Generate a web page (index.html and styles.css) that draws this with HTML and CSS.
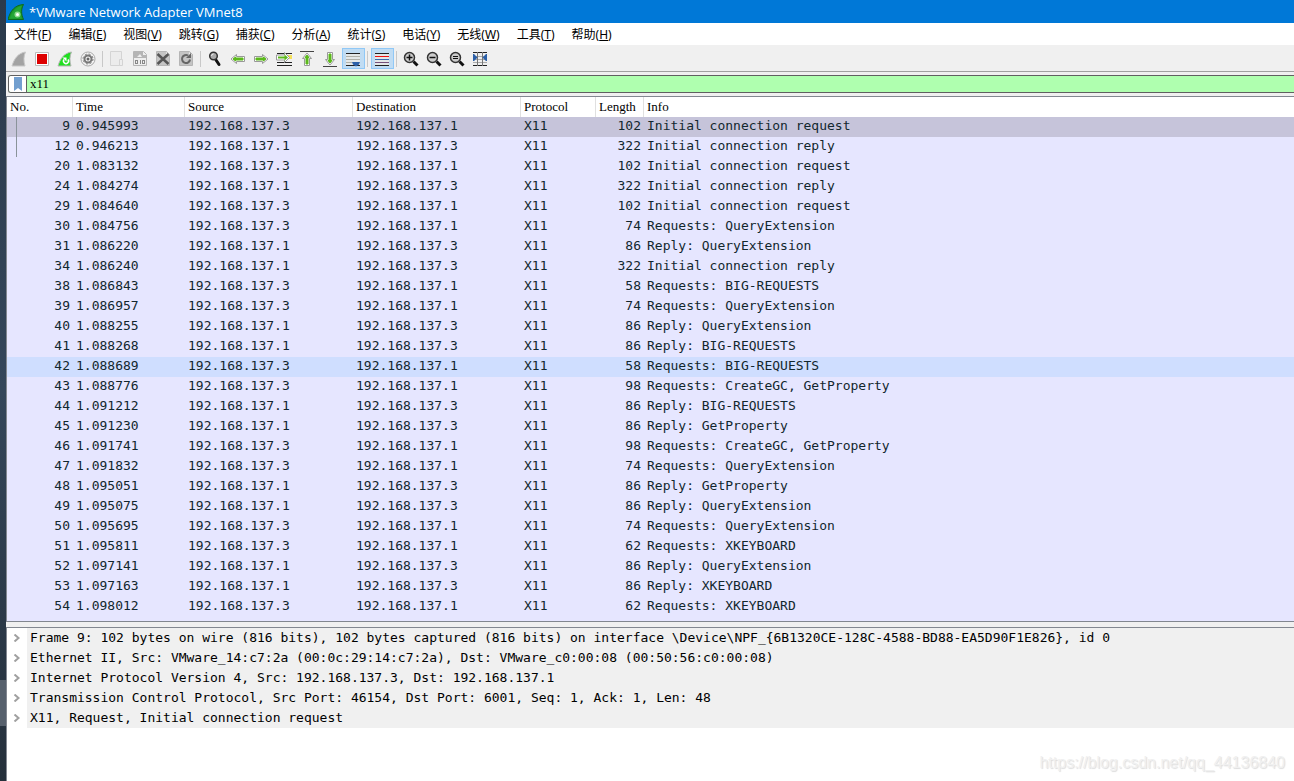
FILE: index.html
```html
<!DOCTYPE html>
<html lang="zh-CN">
<head>
    <meta charset="UTF-8">
    <meta name="viewport" content="width=device-width, initial-scale=1.0">
    <title>*VMware Network Adapter VMnet8</title>
    <link rel="stylesheet" href="styles.css">
</head>
<body>
    <!-- desktop behind the window -->
    <div class="desktop"><span class="desktop-thumb"></span></div>

    <div class="window">
        <header class="titlebar">
            <svg class="logo" width="16" height="16" viewBox="0 0 16 16">
                <path d="M0 15.500C2 7 7 1 15.500 .5C13 5 13 10 15.500 15.500Z" fill="#1c9a2a" stroke="#0c6b1c"/>
                <path d="M2 14.500C4 8 8 3 13.500 2C12 6 12 10 13.500 14.500Z" fill="#24a637"/>
                <circle cx="9.500" cy="10.500" r="3" fill="#8fdc8f"/>
                <circle cx="9.500" cy="10.500" r="1.500" fill="#fff"/>
            </svg>
            <span>*VMware Network Adapter VMnet8</span>
        </header>

        <nav class="menu">
            <a href="#">文件(<u>F</u>)</a>
            <a href="#">编辑(<u>E</u>)</a>
            <a href="#">视图(<u>V</u>)</a>
            <a href="#">跳转(<u>G</u>)</a>
            <a href="#">捕获(<u>C</u>)</a>
            <a href="#">分析(<u>A</u>)</a>
            <a href="#">统计(<u>S</u>)</a>
            <a href="#">电话(<u>Y</u>)</a>
            <a href="#">无线(<u>W</u>)</a>
            <a href="#">工具(<u>T</u>)</a>
            <a href="#">帮助(<u>H</u>)</a>
        </nav>

        <div class="toolbar">
            <button aria-label="Start capture"><svg viewBox="0 0 16 16"><path d="M1 15C3 8 7 2 14.500 1C12.500 5 12.500 10 14 15Z" fill="#a3a3a3" stroke="#c8c8c8"/></svg></button>
            <button aria-label="Stop capture"><svg viewBox="0 0 16 16"><path d="M1.500 1.500h13v13h-13z" fill="#fff" stroke="#bbb"/><path d="M3 3h10v10H3z" fill="#d00"/></svg></button>
            <button aria-label="Restart capture"><svg viewBox="0 0 16 16"><path d="M1 15C3 8 7 2 14.500 1C12.500 5 12.500 10 14 15Z" fill="#1ee01e" stroke="#b5b5b5"/><path d="M7 8.500a2.500 2.500 0 1 0 4 0" fill="none" stroke="#fff" stroke-width="1.500"/><path d="M5.500 6.500h4v4z" fill="#fff"/></svg></button>
            <button aria-label="Capture options"><svg viewBox="0 0 16 16"><circle cx="8" cy="8" r="7" fill="#f4f4f4" stroke="#aaa"/><circle cx="8" cy="8" r="3.500" fill="none" stroke="#777" stroke-width="2"/><circle cx="8" cy="8" r="5" fill="none" stroke="#777" stroke-dasharray="2 1.930"/><circle cx="8" cy="8" r="1.500" fill="#666"/></svg></button>
            <span class="sep"></span>
            <button aria-label="Open file"><svg viewBox="0 0 16 16"><path d="M1.500 .5h11v14h-11z" fill="#ececec" stroke="#d4d4d4"/><path d="M10.500 8.500h3v6h-3z" fill="#eee" stroke="#d4d4d4"/></svg></button>
            <button aria-label="Save file"><svg viewBox="0 0 16 16"><path d="M1.500 .5h10l3 3v11h-13z" fill="#eee" stroke="#b5b5b5"/><path d="M2 1h9v3h3v3H2z" fill="#b5b5b5"/><path d="M5 6l3-3l2 3z" fill="#eee"/><g fill="none" stroke="#888"><rect x="3.500" y="9.500" width="2" height="3"/><path d="M8.500 9v4"/><rect x="10.500" y="9.500" width="2" height="3"/></g></svg></button>
            <button aria-label="Close file"><svg viewBox="0 0 16 16"><path d="M1.500 .5h10l3 3v11h-13z" fill="#c4c4c4" stroke="#b5b5b5"/><path d="M11 1v3h3" fill="#eee"/><path d="M2.500 3l11 10M13.500 3L2.500 13" stroke="#555" stroke-width="2.500"/></svg></button>
            <button aria-label="Reload file"><svg viewBox="0 0 16 16"><path d="M1.500 .5h10l3 3v11h-13z" fill="#c4c4c4" stroke="#b5b5b5"/><path d="M11 1v3h3" fill="#eee"/><path d="M10 4.500a4 4 0 1 0 2 4" fill="none" stroke="#666" stroke-width="2"/><path d="M8 7h5V2z" fill="#666"/></svg></button>
            <span class="sep"></span>
            <button aria-label="Find packet"><svg viewBox="0 0 16 16"><path d="M9 9l3 4.500" stroke="#111" stroke-width="3" stroke-linecap="round"/><circle cx="6.500" cy="5" r="3.800" fill="#aaa" stroke="#333" stroke-width="1.500"/><path d="M4.500 5a2 2 0 0 1 2-2" fill="none" stroke="#eee"/></svg></button>
            <button aria-label="Previous packet"><svg viewBox="0 0 16 16"><path d="M1 8l5.500-4.500v2h8v5h-8v2z" fill="#fff" stroke="#999"/><path d="M3 8l2.500-2v1h7.500v2H5.500v1z" fill="#5cb81c" stroke="#5cb81c"/></svg></button>
            <button aria-label="Next packet"><svg viewBox="0 0 16 16"><path d="M15 8L9.500 3.500v2h-8v5h8v2z" fill="#fff" stroke="#999"/><path d="M13 8l-2.500-2v1H3v2h7.500v1z" fill="#5cb81c" stroke="#5cb81c"/></svg></button>
            <button aria-label="Go to packet"><svg viewBox="0 0 16 16"><path d="M1 2.500h15M1 11.500h15M1 14.500h15" stroke="#222"/><path d="M12 4h4v4h-4z" fill="#f5e05a"/><path d="M13.500 6.500L8.500 1.500v2.500H.5v5h8v2.500z" fill="#fff" stroke="#999"/><path d="M2 6.500h8" stroke="#5cb81c" stroke-width="2"/><path d="M8.500 3.500l3.500 3l-3.500 3z" fill="#5cb81c"/></svg></button>
            <button aria-label="First packet"><svg viewBox="0 0 16 16"><path d="M1 .5h14" stroke="#444"/><path d="M8 2l4.500 5.500h-2v7h-5v-7h-2z" fill="#fff" stroke="#999"/><path d="M8 4l2 2.500H9V13H7V6.500H6z" fill="#5cb81c" stroke="#5cb81c"/></svg></button>
            <button aria-label="Last packet"><svg viewBox="0 0 16 16"><path d="M1 15.500h14" stroke="#444"/><path d="M8 14l4.500-5.500h-2v-7h-5v7h-2z" fill="#fff" stroke="#999"/><path d="M8 12l2-2.500H9V3H7v6.500H6z" fill="#5cb81c" stroke="#5cb81c"/></svg></button>
            <button class="on" aria-label="Auto scroll" aria-pressed="true"><svg viewBox="0 0 16 16"><path d="M1 2h14v12H1z" fill="#e4e8e8"/><path d="M1 2.500h14M1 14.500h14" stroke="#222"/><path d="M1 5.500h14M1 8.500h14M1 11.500h6" stroke="#b0b0a8"/><path d="M7 11h8l-1 2.500l-3 2l-3-2z" fill="#2c60a8"/></svg></button>
            <span class="sep"></span>
            <button class="on" aria-label="Colorize" aria-pressed="true"><svg viewBox="0 0 16 16"><path d="M1 2h14v12H1z" fill="#e4e8e8"/><path d="M1 2.500h14M1 14.500h14" stroke="#222"/><path d="M1 5.500h14" stroke="#e11"/><path d="M1 8.500h14" stroke="#3a6ab0"/><path d="M1 11.500h14" stroke="#75507b"/></svg></button>
            <span class="sep"></span>
            <button aria-label="Zoom in"><svg viewBox="0 0 16 16"><path d="M10.500 10.500l4 4" stroke="#111" stroke-width="3"/><circle cx="6.500" cy="6.500" r="5" fill="#ccc" stroke="#333" stroke-width="1.500"/><path d="M3.500 6.500h6M6.500 3.500v6" stroke="#111" stroke-width="1.500"/></svg></button>
            <button aria-label="Zoom out"><svg viewBox="0 0 16 16"><path d="M10.500 10.500l4 4" stroke="#111" stroke-width="3"/><circle cx="6.500" cy="6.500" r="5" fill="#ccc" stroke="#333" stroke-width="1.500"/><path d="M3.500 6.500h6" stroke="#111" stroke-width="1.500"/></svg></button>
            <button aria-label="Normal size"><svg viewBox="0 0 16 16"><path d="M10.500 10.500l4 4" stroke="#111" stroke-width="3"/><circle cx="6.500" cy="6.500" r="5" fill="#ccc" stroke="#333" stroke-width="1.500"/><path d="M4 5.500h5M4 7.500h5" stroke="#111"/></svg></button>
            <button aria-label="Resize columns"><svg viewBox="0 0 16 16"><path d="M1 1.500h14M1 14.500h14" stroke="#222"/><path d="M1 5.500h14M1 8.500h14M1 11.500h14" stroke="#aaa"/><path d="M5.500 1v14M10.500 1v14" stroke="#777"/><path d="M1 3v7h1l3.500-3.500L2 3zM15 3v7h-1l-3.500-3.500L14 3z" fill="#2c60a8"/></svg></button>
        </div>

        <div class="filterbar">
            <button class="bookmark" aria-label="Filter bookmarks"><svg width="8" height="14" viewBox="0 0 8 14"><path d="M0 0h8v14L4 11L0 14z" fill="#729fcf"/></svg></button>
            <input class="filter" type="text" value="x11" aria-label="Display filter">
        </div>

        <main class="packets">
            <table>
                <colgroup>
                    <col class="c-no"><col class="c-time"><col class="c-addr"><col class="c-addr"><col class="c-proto"><col class="c-len"><col>
                </colgroup>
                <thead>
                    <tr><th>No.</th><th>Time</th><th>Source</th><th>Destination</th><th>Protocol</th><th>Length</th><th>Info</th></tr>
                </thead>
                <tbody>
                    <tr class="selected linked"><td>9</td><td>0.945993</td><td>192.168.137.3</td><td>192.168.137.1</td><td>X11</td><td>102</td><td>Initial connection request</td></tr>
                    <tr class="linked"><td>12</td><td>0.946213</td><td>192.168.137.1</td><td>192.168.137.3</td><td>X11</td><td>322</td><td>Initial connection reply</td></tr>
                    <tr><td>20</td><td>1.083132</td><td>192.168.137.3</td><td>192.168.137.1</td><td>X11</td><td>102</td><td>Initial connection request</td></tr>
                    <tr><td>24</td><td>1.084274</td><td>192.168.137.1</td><td>192.168.137.3</td><td>X11</td><td>322</td><td>Initial connection reply</td></tr>
                    <tr><td>29</td><td>1.084640</td><td>192.168.137.3</td><td>192.168.137.1</td><td>X11</td><td>102</td><td>Initial connection request</td></tr>
                    <tr><td>30</td><td>1.084756</td><td>192.168.137.3</td><td>192.168.137.1</td><td>X11</td><td>74</td><td>Requests: QueryExtension</td></tr>
                    <tr><td>31</td><td>1.086220</td><td>192.168.137.1</td><td>192.168.137.3</td><td>X11</td><td>86</td><td>Reply: QueryExtension</td></tr>
                    <tr><td>34</td><td>1.086240</td><td>192.168.137.1</td><td>192.168.137.3</td><td>X11</td><td>322</td><td>Initial connection reply</td></tr>
                    <tr><td>38</td><td>1.086843</td><td>192.168.137.3</td><td>192.168.137.1</td><td>X11</td><td>58</td><td>Requests: BIG-REQUESTS</td></tr>
                    <tr><td>39</td><td>1.086957</td><td>192.168.137.3</td><td>192.168.137.1</td><td>X11</td><td>74</td><td>Requests: QueryExtension</td></tr>
                    <tr><td>40</td><td>1.088255</td><td>192.168.137.1</td><td>192.168.137.3</td><td>X11</td><td>86</td><td>Reply: QueryExtension</td></tr>
                    <tr><td>41</td><td>1.088268</td><td>192.168.137.1</td><td>192.168.137.3</td><td>X11</td><td>86</td><td>Reply: BIG-REQUESTS</td></tr>
                    <tr class="hover"><td>42</td><td>1.088689</td><td>192.168.137.3</td><td>192.168.137.1</td><td>X11</td><td>58</td><td>Requests: BIG-REQUESTS</td></tr>
                    <tr><td>43</td><td>1.088776</td><td>192.168.137.3</td><td>192.168.137.1</td><td>X11</td><td>98</td><td>Requests: CreateGC, GetProperty</td></tr>
                    <tr><td>44</td><td>1.091212</td><td>192.168.137.1</td><td>192.168.137.3</td><td>X11</td><td>86</td><td>Reply: BIG-REQUESTS</td></tr>
                    <tr><td>45</td><td>1.091230</td><td>192.168.137.1</td><td>192.168.137.3</td><td>X11</td><td>86</td><td>Reply: GetProperty</td></tr>
                    <tr><td>46</td><td>1.091741</td><td>192.168.137.3</td><td>192.168.137.1</td><td>X11</td><td>98</td><td>Requests: CreateGC, GetProperty</td></tr>
                    <tr><td>47</td><td>1.091832</td><td>192.168.137.3</td><td>192.168.137.1</td><td>X11</td><td>74</td><td>Requests: QueryExtension</td></tr>
                    <tr><td>48</td><td>1.095051</td><td>192.168.137.1</td><td>192.168.137.3</td><td>X11</td><td>86</td><td>Reply: GetProperty</td></tr>
                    <tr><td>49</td><td>1.095075</td><td>192.168.137.1</td><td>192.168.137.3</td><td>X11</td><td>86</td><td>Reply: QueryExtension</td></tr>
                    <tr><td>50</td><td>1.095695</td><td>192.168.137.3</td><td>192.168.137.1</td><td>X11</td><td>74</td><td>Requests: QueryExtension</td></tr>
                    <tr><td>51</td><td>1.095811</td><td>192.168.137.3</td><td>192.168.137.1</td><td>X11</td><td>62</td><td>Requests: XKEYBOARD</td></tr>
                    <tr><td>52</td><td>1.097141</td><td>192.168.137.1</td><td>192.168.137.3</td><td>X11</td><td>86</td><td>Reply: QueryExtension</td></tr>
                    <tr><td>53</td><td>1.097163</td><td>192.168.137.1</td><td>192.168.137.3</td><td>X11</td><td>86</td><td>Reply: XKEYBOARD</td></tr>
                    <tr><td>54</td><td>1.098012</td><td>192.168.137.3</td><td>192.168.137.1</td><td>X11</td><td>62</td><td>Requests: XKEYBOARD</td></tr>
                </tbody>
            </table>
        </main>

        <section class="details">
            <ul>
                <li><svg class="arrow" viewBox="0 0 8 8"><path d="M1.500 .5L5.500 4L1.500 7.500"/></svg><span>Frame 9: 102 bytes on wire (816 bits), 102 bytes captured (816 bits) on interface \Device\NPF_{6B1320CE-128C-4588-BD88-EA5D90F1E826}, id 0</span></li>
                <li><svg class="arrow" viewBox="0 0 8 8"><path d="M1.500 .5L5.500 4L1.500 7.500"/></svg><span>Ethernet II, Src: VMware_14:c7:2a (00:0c:29:14:c7:2a), Dst: VMware_c0:00:08 (00:50:56:c0:00:08)</span></li>
                <li><svg class="arrow" viewBox="0 0 8 8"><path d="M1.500 .5L5.500 4L1.500 7.500"/></svg><span>Internet Protocol Version 4, Src: 192.168.137.3, Dst: 192.168.137.1</span></li>
                <li><svg class="arrow" viewBox="0 0 8 8"><path d="M1.500 .5L5.500 4L1.500 7.500"/></svg><span>Transmission Control Protocol, Src Port: 46154, Dst Port: 6001, Seq: 1, Ack: 1, Len: 48</span></li>
                <li><svg class="arrow" viewBox="0 0 8 8"><path d="M1.500 .5L5.500 4L1.500 7.500"/></svg><span>X11, Request, Initial connection request</span></li>
            </ul>
        </section>
    </div>

    <div class="watermark">https://blog.csdn.net/qq_44136840</div>
</body>
</html>
```
FILE: styles.css
```css
* {
    box-sizing: border-box;
}

body {
    margin: 0;
    min-height: 100vh;
    display: flex;
    overflow: hidden;
    font-family: "Noto Sans", "Noto Sans CJK SC", sans-serif;
    font-size: 12px;
    color: #000;
}

button {
    padding: 0;
    border: 0;
    background: none;
}

.desktop {
    flex: none;
    width: 6px;
    padding-top: 680px;
    background: linear-gradient(#2b3a4b, #34465a 50%, #25303b);
}

.desktop-thumb {
    display: block;
    height: 46px;
    background: #56606c;
}

.window {
    flex: 1;
    min-width: 0;
    display: flex;
    flex-direction: column;
    background: #f0f0f0;
}

.titlebar {
    display: flex;
    align-items: center;
    gap: 5px;
    height: 23px;
    padding-left: 2px;
    background: #0078d7;
    color: #fff;
    font-family: "Open Sans", sans-serif;
    font-size: 13px;
}

.menu {
    display: flex;
    gap: 1px;
    height: 23px;
    line-height: 23px;
    background: #fff;
    border-bottom: 1px solid #f0f0f0;
}

.menu a {
    padding: 0 8px;
    color: #000;
    text-decoration: none;
}

.toolbar {
    display: flex;
    align-items: center;
    height: 26px;
    padding-left: 2px;
    border-bottom: 1px solid #a0a0a0;
}

.toolbar button {
    width: 23px;
    height: 21px;
    padding: 2px 3px 1px 2px;
    border: 1px solid transparent;
}

.toolbar svg {
    display: block;
    width: 16px;
    height: 16px;
}

.toolbar .on {
    background: #c0dcf3;
    border-color: #90c8f6;
}

.sep {
    width: 6px;
    height: 16px;
    background: linear-gradient(#c8c8c8, #c8c8c8) 2px 0 / 1px 100% no-repeat;
}

.filterbar {
    display: flex;
    height: 18px;
    margin: 3px 0 3px 2px;
    background: #afffaf;
    border: 1px solid #606060;
    border-right: 0;
    border-radius: 3px 0 0 3px;
    overflow: hidden;
}

.bookmark {
    display: flex;
    align-items: center;
    justify-content: center;
    width: 18px;
    background: #fff;
    border-right: 1px solid #606060;
}

.filter {
    flex: 1;
    min-width: 0;
    padding: 0 3px;
    border: 0;
    outline: 0;
    background: transparent;
    font-family: "Liberation Serif", serif;
    font-size: 13px;
}

.packets {
    height: 526px;
    background: #e6e6ff;
    border: 1px solid #828790;
    border-right: 0;
}

table {
    width: 100%;
    table-layout: fixed;
    border-collapse: collapse;
}

.c-no {
    width: 66px;
}

.c-time {
    width: 112px;
}

.c-addr {
    width: 168px;
}

.c-proto {
    width: 75px;
}

.c-len {
    width: 48px;
}

th, td {
    height: 20px;
    padding: 0 3px 2px;
    line-height: 18px;
    text-align: left;
    white-space: nowrap;
}

th {
    padding-bottom: 0;
    background: linear-gradient(#e0e0e0, #e0e0e0) 100% 0 / 1px 100% no-repeat #fff;
    font-family: "Liberation Serif", serif;
    font-size: 13px;
    font-weight: normal;
}

th:last-child {
    background: #fff;
}

td {
    font-family: "DejaVu Sans Mono", monospace;
    font-size: 13px;
    color: #12272e;
}

td:nth-child(1), td:nth-child(6) {
    text-align: right;
}

.selected {
    background: #c6c4da;
}

.hover {
    background: #cfdeff;
}

/* conversation line */
.linked td:first-child {
    background: linear-gradient(#8a939a, #8a939a) 9px 0 / 1px 100% no-repeat;
}

.details {
    flex: 1;
    margin-top: 5px;
    background: #fff;
    border-top: 1px solid #828790;
    border-left: 1px solid #828790;
}

.details ul {
    margin: 0;
    padding: 0;
    list-style: none;
}

.details li {
    display: flex;
    align-items: center;
    height: 20px;
    font-family: "DejaVu Sans Mono", monospace;
    font-size: 13px;
    line-height: 20px;
    white-space: nowrap;
}

.details span {
    flex: 1;
    padding-left: 3px;
    background: #f0f0f0;
}

.arrow {
    flex: none;
    width: 8px;
    height: 8px;
    margin: 0 6px;
    fill: none;
    stroke: #a0a0a0;
    stroke-width: 2;
}

.watermark {
    position: absolute;
    right: 9px;
    bottom: 9px;
    font-family: "Liberation Sans", sans-serif;
    font-size: 16px;
    color: #f0f0f0;
    text-shadow: 1px 1px 1px #dcdcdc;
}
```
